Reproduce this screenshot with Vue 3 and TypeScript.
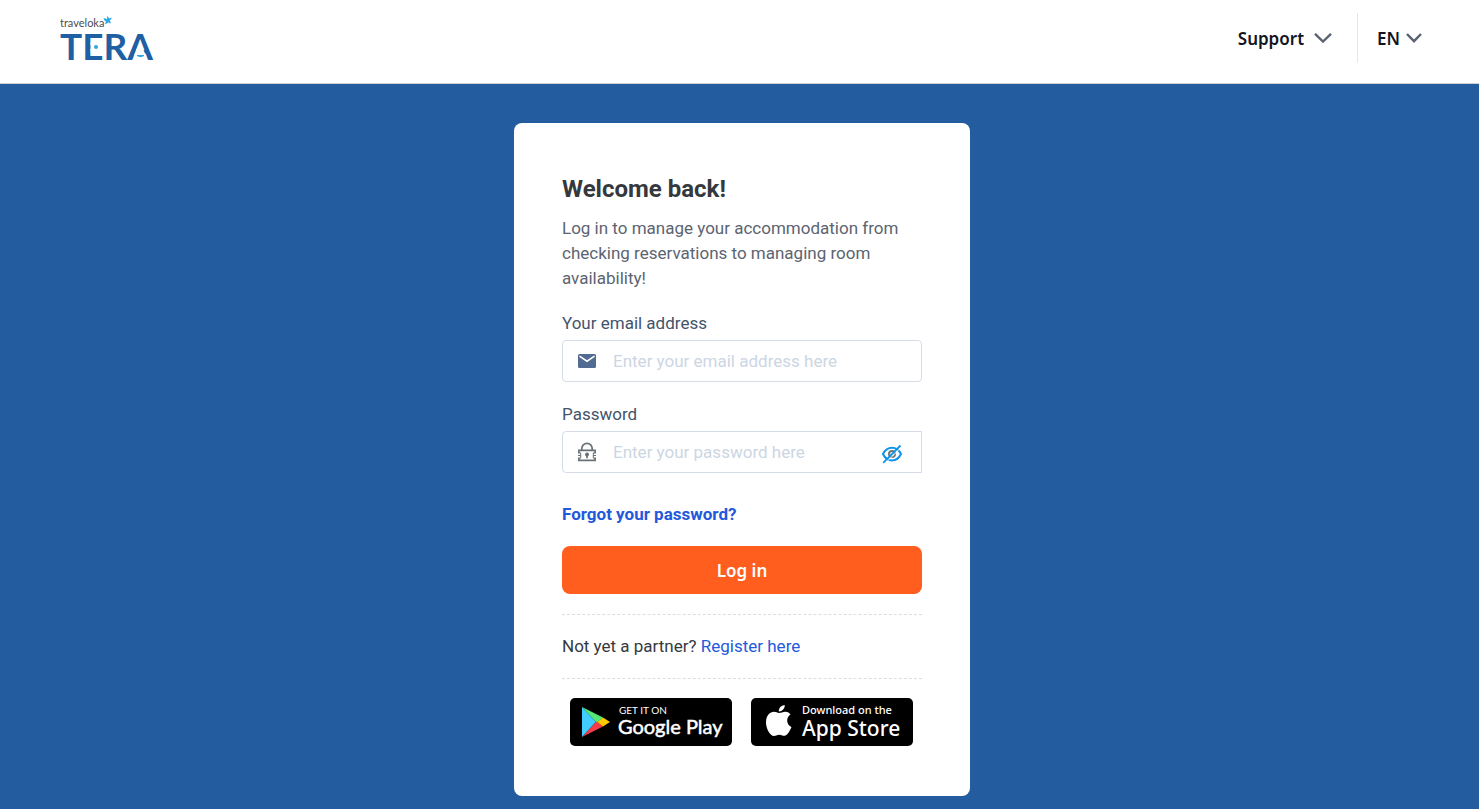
<script setup lang="ts">
import { ref } from 'vue'

const email = ref('')
const password = ref('')
const passwordVisible = ref(false)
</script>

<template>
  <div class="page">
    <header class="header">
      <a class="brand" href="#" aria-label="traveloka TERA">
        <svg width="98" height="56" viewBox="0 0 98 56">
          <text class="brand-small" x="0" y="12">traveloka</text>
          <path d="M43.500 3.300 Q46 3.200 47 4.200 L47.200 1 Q48.800 2 49 3.600 L51.800 2.600 Q51.300 5 49.600 5.600 Q51 7 50.600 8.600 Q49 8.200 48.200 7.200 Q47 9.200 44.800 9 Q46 7.600 45.800 6.400 Q44 5.600 43.500 3.300 Z" fill="#2aa9e6" />
          <text class="brand-large" x="0" y="45">TERA</text>
          <path d="M30.500 27.500 H41.500 V36.500 H30.500 Z" fill="#fff" />
          <path d="M76.400 34 H83.200 L85.600 40.200 H74 Z" fill="#fff" />
          <circle cx="36" cy="32" r="2" fill="#2aa9e6" />
          <path d="M77 40.500 H84 Q80.500 43 77 40.500 Z" fill="#2aa9e6" stroke="#2aa9e6" />
        </svg>
      </a>
      <nav class="nav">
        <button class="nav-item support" type="button">
          Support
          <svg width="18" height="10" viewBox="0 0 18 10"><path d="M1 .8 L9 8.500 L17 .8" /></svg>
        </button>
        <button class="nav-item language" type="button">
          EN
          <svg width="16" height="10" viewBox="0 0 16 10"><path d="M1 1 L8 8.200 L15 1" /></svg>
        </button>
      </nav>
    </header>

    <main class="main">
      <form class="card" @submit.prevent>
        <h1>Welcome back!</h1>
        <p class="intro">Log in to manage your accommodation from checking reservations to managing room availability!</p>

        <label for="email">Your email address</label>
        <div class="field">
          <svg width="18" height="14" viewBox="0 0 18 14">
            <rect width="18" height="14" rx="1.5" fill="#526b92" />
            <path d="M1.500 2.200 L9 7.200 L16.500 2.200" fill="none" stroke="#fff" stroke-width="1.6" />
          </svg>
          <input id="email" v-model="email" type="email" placeholder="Enter your email address here" />
        </div>

        <label for="password">Password</label>
        <div class="field square">
          <svg width="18" height="20" viewBox="0 0 18 20" fill="none" stroke="#687176" stroke-width="1.7">
            <path d="M3.800 8 V6.500 A5.200 5.200 0 0 1 14.200 6.500 V8" />
            <path d="M.9 11 V8.400 H17.100 V11 M.9 16 V18.300 H17.100 V16" />
            <path d="M0 11 H3 M0 13.500 H3 M0 16 H3 M15 11 H18 M15 13.500 H18 M15 16 H18" stroke-width="1" />
            <path d="M2.700 11 V16 M15.300 11 V16" stroke-width="1" />
            <circle cx="9" cy="12.500" r="2" fill="#687176" stroke="none" />
            <path d="M9 13 V16.300" />
          </svg>
          <input id="password" v-model="password" :type="passwordVisible ? 'text' : 'password'" placeholder="Enter your password here" />
          <button class="reveal" type="button" aria-label="Show password" @click="passwordVisible = !passwordVisible">
            <svg width="20" height="20" viewBox="0 0 20 20" fill="none" stroke-width="2">
              <path d="M1 10 C5 1.500 15 1.500 19 10 C15 18.500 5 18.500 1 10 Z" stroke="#0f94ec" />
              <circle cx="10" cy="10" r="3" stroke="#70777c" />
              <path d="M2.700 19.800 L19.700 2.800" stroke="#fff" stroke-width="1" />
              <path d="M1.200 18.800 L18.500 1.500" stroke="#0f94ec" stroke-width="1.8" />
            </svg>
          </button>
        </div>

        <a class="forgot" href="#">Forgot your password?</a>
        <button class="login" type="submit">Log in</button>
        <p class="register">Not yet a partner? <a href="#">Register here</a></p>

        <div class="stores">
          <a class="store" href="#" aria-label="Get it on Google Play">
            <svg viewBox="0 0 162 48">
              <path d="M12 9 L26 24 L12 39 Z" fill="#40ccff" />
              <path d="M12 9 L33 19.500 L27.500 24.500 L26 24 Z" fill="#55e875" />
              <path d="M12 39 L33 28.500 L27.500 23.500 L26 24 Z" fill="#f43b48" />
              <path d="M33 19.500 L40 24 L33 28.500 L27.500 24 Z" fill="#ffca00" />
              <text class="google-small" x="49" y="16">GET IT ON</text>
              <text class="google-large" x="48" y="36">Google Play</text>
            </svg>
          </a>
          <a class="store" href="#" aria-label="Download on the App Store">
            <svg viewBox="0 0 162 48">
              <g fill="#fff">
                <path d="M28 15 C30.500 15 32 13.500 34.500 13.700 C36.800 13.800 38.500 15 39.500 16.500 C34.500 19.500 35.500 27 40.500 29 C39.300 32 36.500 37.500 33.500 37.800 C31.500 38 30.500 36.700 28.200 36.700 C25.800 36.700 24.800 38 22.800 38 C19.500 38 15 31 15 24.500 C15 17.500 19 13.800 23 13.800 C25.200 13.800 26.500 15 28 15 Z" />
                <path d="M33.700 7 C34 10.500 31 13.700 27.800 13.500 C27.400 10.300 30.500 7.200 33.700 7 Z" />
              </g>
              <text class="apple-small" x="51" y="16">Download on the</text>
              <text class="apple-large" x="51" y="38">App Store</text>
            </svg>
          </a>
        </div>
      </form>
    </main>
  </div>
</template>

<style>
body {
  margin: 0;
  background: #235d9f;
}
</style>

<style scoped>
.page {
  min-height: 100vh;
  box-sizing: border-box;
  background: #235d9f;
  color: #35393d;
  font: 17px/26px Roboto, sans-serif;
}
.header {
  display: flex;
  justify-content: space-between;
  align-items: flex-start;
  box-sizing: border-box;
  height: 84px;
  padding: 13px 57px 0 60px;
  background: #fff;
  border-bottom: 1px solid #cdd0d1;
}
.brand svg {
  display: block;
  margin-top: 2px;
}
.brand-small {
  font: 11px Lato, sans-serif;
  fill: #4b4d50;
}
.brand-large {
  font: bold 37px Lato, sans-serif;
  fill: #1f5fa4;
}
.nav {
  display: flex;
  height: 50px;
}
button {
  margin: 0;
  padding: 0;
  border: 0;
  background: none;
  cursor: pointer;
}
.nav-item {
  display: flex;
  align-items: center;
  color: #13151f;
  font: 600 17px "Noto Sans", sans-serif;
}
.nav-item svg {
  fill: none;
  stroke: #5b6372;
  stroke-width: 2.4;
}
.support {
  gap: 10px;
  padding-right: 25px;
  border-right: 1px solid #e3e5ef;
}
.language {
  gap: 6px;
  padding-left: 19px;
}
.main {
  padding: 39px 0 13px 5px;
}
.card {
  box-sizing: border-box;
  width: 100%;
  max-width: 456px;
  margin: 0 auto;
  padding: 48px 48px 50px;
  background: #fff;
  border-radius: 8px;
}
h1 {
  margin: 0 0 9px;
  font: bold 24px/36px Roboto, sans-serif;
}
.intro {
  margin: 0 0 19px;
  color: #5c6471;
  line-height: 25px;
}
label {
  display: block;
  margin-bottom: 4px;
  color: #43536a;
}
.field {
  display: flex;
  align-items: center;
  box-sizing: border-box;
  height: 42px;
  margin-bottom: 19px;
  padding: 0 19px 0 15px;
  border: 1px solid #d6dde9;
  border-radius: 4px;
}
.field.square {
  border-radius: 4px 0 0 4px;
}
input {
  flex: 1;
  min-width: 0;
  margin-left: 17px;
  padding: 0;
  border: 0;
  outline: 0;
  background: none;
  color: #35393d;
  font: 17px/24px Roboto, sans-serif;
}
input::placeholder {
  color: #ccd6e3;
}
.reveal {
  padding-top: 4px;
}
.reveal svg {
  display: block;
}
a {
  color: #2359db;
  text-decoration: none;
}
.forgot {
  display: block;
  margin: 28px 0 19px;
  font-weight: bold;
}
.login {
  display: block;
  width: 100%;
  height: 48px;
  border-radius: 8px;
  background: #ff5e1f;
  color: #fff;
  font: 600 17px "Noto Sans", sans-serif;
}
.register {
  margin: 20px 0 19px;
  padding: 18px 0 19px;
  border-top: 1px dashed #dadde3;
  border-bottom: 1px dashed #dadde3;
}
.stores {
  display: flex;
  gap: 19px;
  padding: 0 8px;
}
.store {
  flex: 0 1 162px;
  border-radius: 5px;
  background: #000;
}
.store svg {
  display: block;
  width: 100%;
}
.store text {
  fill: #fff;
}
.google-small {
  font: 10px Lato, sans-serif;
}
.google-large {
  font: 20px Lato, sans-serif;
  stroke: #fff;
  stroke-width: 0.5;
}
.apple-small {
  font: 500 11px "Noto Sans", sans-serif;
}
.apple-large {
  font: 500 21px "Noto Sans", sans-serif;
}
</style>
